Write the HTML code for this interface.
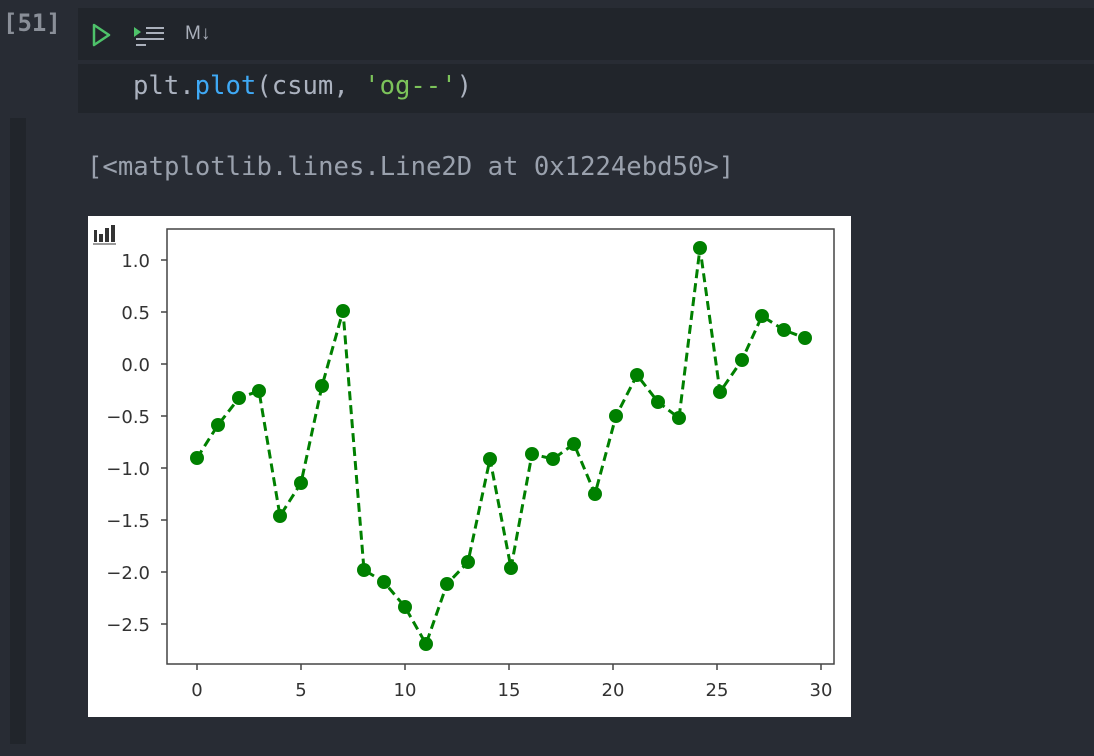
<!DOCTYPE html>
<html><head><meta charset="utf-8"><style>
html,body{margin:0;padding:0;width:1094px;height:756px;background:#282c34;overflow:hidden;font-family:"DejaVu Sans Mono","Liberation Mono",monospace}
.abs{position:absolute}
</style></head><body>
<div class="abs" style="left:3px;top:9px;font-size:24px;font-weight:bold;color:#8a8f98;font-family:'DejaVu Sans Mono',monospace">[51]</div>
<div class="abs" style="left:78px;top:8px;width:1016px;height:52px;background:#21252b"></div>
<svg class="abs" style="left:90px;top:22px" width="140" height="28">
<path d="M4 3 L19 13 L4 23 Z" fill="none" stroke="#4ec26a" stroke-width="2.5" stroke-linejoin="round"/>
<path d="M44 5 L51 10 L44 15 Z" fill="#4ec26a"/>
<g stroke="#aab0bb" stroke-width="2"><line x1="56" y1="6" x2="74" y2="6"/><line x1="56" y1="11" x2="74" y2="11"/><line x1="46" y1="17" x2="74" y2="17"/><line x1="46" y1="23" x2="56" y2="23"/></g>
</svg>
<div class="abs" style="left:185px;top:23px;font-size:19px;color:#aab0bb;font-family:'Liberation Sans',sans-serif">M↓</div>
<div class="abs" style="left:78px;top:64px;width:1016px;height:49px;background:#21252b"></div>
<div class="abs" style="left:133px;top:71px;font-size:25.6px;color:#abb2bf;white-space:pre">plt.<span style="color:#3fa9f5">plot</span>(csum, <span style="color:#7cc35a">'og--'</span>)</div>
<div class="abs" style="left:10px;top:118px;width:16px;height:626px;background:#21252b"></div>
<div class="abs" style="left:87px;top:152px;font-size:25.6px;color:#9aa1ad;white-space:pre">[&lt;matplotlib.lines.Line2D at 0x1224ebd50&gt;]</div>
<div class="abs" style="left:88px;top:216px;width:763px;height:501px;background:#fff"></div>
<svg class="abs" style="left:0;top:0" width="1094" height="756">
<g fill="#333" stroke="#333" stroke-width="1.5">
<rect x="94" y="230" width="3" height="12" stroke="none"/><rect x="99" y="234" width="4" height="8" stroke="none"/><rect x="105" y="228" width="4" height="14" stroke="none"/><rect x="111" y="225" width="4" height="17" stroke="none"/>
<line x1="93" y1="244" x2="116" y2="244" stroke-width="1"/>
</g>
<rect x="167" y="229" width="667" height="435" fill="none" stroke="#444" stroke-width="1.5"/>
<g stroke="#444" stroke-width="1.5">
<line x1="161" y1="260" x2="167" y2="260"/><line x1="161" y1="312" x2="167" y2="312"/><line x1="161" y1="364" x2="167" y2="364"/><line x1="161" y1="416" x2="167" y2="416"/><line x1="161" y1="468" x2="167" y2="468"/><line x1="161" y1="520" x2="167" y2="520"/><line x1="161" y1="572" x2="167" y2="572"/><line x1="161" y1="624" x2="167" y2="624"/>
<line x1="197" y1="664" x2="197" y2="670"/><line x1="301" y1="664" x2="301" y2="670"/><line x1="405" y1="664" x2="405" y2="670"/><line x1="509" y1="664" x2="509" y2="670"/><line x1="613" y1="664" x2="613" y2="670"/><line x1="717" y1="664" x2="717" y2="670"/><line x1="821" y1="664" x2="821" y2="670"/>
</g>
<g font-family="'DejaVu Sans','Liberation Sans',sans-serif" font-size="18" fill="#333" text-anchor="end">
<text x="150" y="267">1.0</text><text x="150" y="319">0.5</text><text x="150" y="371">0.0</text><text x="150" y="423">−0.5</text><text x="150" y="475">−1.0</text><text x="150" y="527">−1.5</text><text x="150" y="579">−2.0</text><text x="150" y="631">−2.5</text>
</g>
<g font-family="'DejaVu Sans','Liberation Sans',sans-serif" font-size="18" fill="#333" text-anchor="middle">
<text x="197" y="696">0</text><text x="301" y="696">5</text><text x="405" y="696">10</text><text x="509" y="696">15</text><text x="613" y="696">20</text><text x="717" y="696">25</text><text x="821" y="696">30</text>
</g>
<polyline fill="none" stroke="#008000" stroke-width="3" stroke-dasharray="9,5" points="197,458 218,425 239,398 259,391 280,516 301,483 322,386 343,311 364,570 384,582 405,607 426,644 447,584 468,562 490,459 511,568 532,454 553,459 574,444 595,494 616,416 637,375 658,402 679,418 700,248 720,392 742,360 762,316 784,330 805,338"/>
<g fill="#008000">
<circle cx="197" cy="458" r="7"/><circle cx="218" cy="425" r="7"/><circle cx="239" cy="398" r="7"/><circle cx="259" cy="391" r="7"/><circle cx="280" cy="516" r="7"/><circle cx="301" cy="483" r="7"/><circle cx="322" cy="386" r="7"/><circle cx="343" cy="311" r="7"/><circle cx="364" cy="570" r="7"/><circle cx="384" cy="582" r="7"/><circle cx="405" cy="607" r="7"/><circle cx="426" cy="644" r="7"/><circle cx="447" cy="584" r="7"/><circle cx="468" cy="562" r="7"/><circle cx="490" cy="459" r="7"/><circle cx="511" cy="568" r="7"/><circle cx="532" cy="454" r="7"/><circle cx="553" cy="459" r="7"/><circle cx="574" cy="444" r="7"/><circle cx="595" cy="494" r="7"/><circle cx="616" cy="416" r="7"/><circle cx="637" cy="375" r="7"/><circle cx="658" cy="402" r="7"/><circle cx="679" cy="418" r="7"/><circle cx="700" cy="248" r="7"/><circle cx="720" cy="392" r="7"/><circle cx="742" cy="360" r="7"/><circle cx="762" cy="316" r="7"/><circle cx="784" cy="330" r="7"/><circle cx="805" cy="338" r="7"/>
</g>
</svg>
</body></html>
